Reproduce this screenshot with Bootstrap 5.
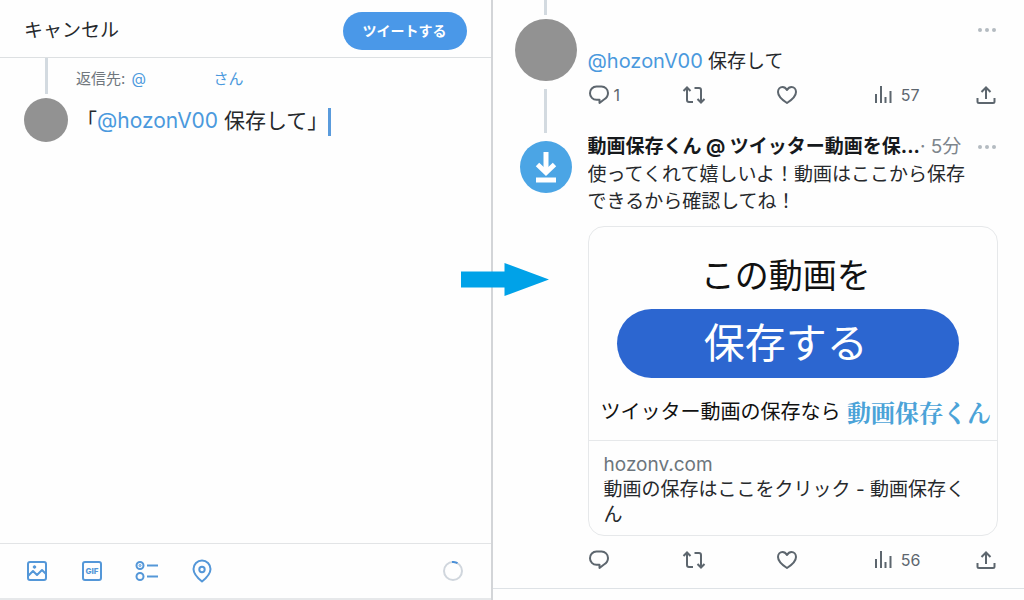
<!DOCTYPE html>
<html lang="ja">
<head>
<meta charset="utf-8">
<meta name="viewport" content="width=device-width, initial-scale=1">
<title>動画保存くん</title>
<link href="https://cdn.jsdelivr.net/npm/bootstrap@5.3.0/dist/css/bootstrap.min.css" rel="stylesheet">
<style>
  body { font-family: Inter, "Noto Sans CJK JP", sans-serif; color: #26292c; background: #fefefe; }
  a { color: #4a99dd; text-decoration: none; }
  svg { display: block; }
  .pane-compose { width: 48.1%; border-right: 2px solid #d3d5d8; }
  .compose-head { height: 58px; border-bottom: 1px solid #dde0e2; padding: 4px 24px 0; }
  .btn-cancel { font-size: 19px; line-height: 28px; color: #26292c; }
  .btn-tweet { font-size: 14px; font-weight: 700; line-height: 22px; color: #fff; background: #4a98e8; padding: 8px 20px; }
  .compose-rail { width: 44px; }
  .thread-line { width: 3px; background: #d3dae0; }
  .dot-avatar { background: #929292; border-radius: 50%; }
  .reply-to { font-size: 15px; line-height: 22px; color: #70777d; padding-top: 10px; }
  .reply-name { width: 84px; padding-left: 2px; }
  .draft { font-size: 21px; line-height: 32px; outline: 0; margin-top: 15px; }
  .caret { display: inline-block; width: 3px; height: 28px; background: #5a9bdc; vertical-align: middle; }
  .compose-tools { height: 57px; border-top: 1px solid #e2e4e6; border-bottom: 2px solid #e6e8ea; padding: 0 28px 0 25px; color: #5497d8; }
  .tool-set { gap: 31px; }
  .pane-thread { padding: 0 26px 0 21px; }
  .rail { width: 64px; }
  .post { gap: 10px; }
  .post-text { font-size: 19px; line-height: 27px; }
  .mention { font-size: 20px; }
  .post-name { font-size: 19px; line-height: 28px; color: #16191c; }
  .post-time { font-size: 19px; line-height: 28px; color: #7d858c; }
  .post-actions { display: grid; grid-template-columns: repeat(4, 23%) auto; color: #5d666e; font-size: 16px; line-height: 24px; }
  .btn-plain { border: 0; padding: 0; background: none; color: inherit; display: flex; align-items: center; }
  .dots { color: #b4bbc1; }
  .logo-avatar { width: 52px; height: 52px; background: #4ba5e5; border-radius: 50%; }
  .link-card { border: 1px solid #e6e8ea; border-radius: 16px; color: inherit; overflow: hidden; margin-top: 11px; }
  .promo { padding: 24px 6px 8px 12px; border-bottom: 1px solid #e6e8ea; color: #111; }
  .promo-title { font-size: 34px; line-height: 50px; padding-right: 20px; }
  .promo-pill { font-size: 41px; line-height: 69px; background: #2c66d0; color: #fff; margin: 8px 32px 14px 16px; padding-right: 4px; }
  .promo-foot { font-size: 20px; line-height: 40px; }
  .promo-brand { font-family: "Noto Serif CJK JP", "Noto Sans CJK JP", serif; font-size: 24px; font-weight: 700; color: #4ba3d8; }
  .card-info { font-size: 19px; line-height: 25px; padding: 11px 15px 8px; }
  .card-host { color: #6c757c; }
  .flow-arrow { position: absolute; left: 45%; top: 263px; }
</style>
</head>
<body>
<main class="d-flex min-vh-100 position-relative">

  <section class="pane-compose d-flex flex-column flex-shrink-0">
    <header class="compose-head d-flex align-items-center justify-content-between">
      <button type="button" class="btn-plain btn-cancel">キャンセル</button>
      <button type="button" class="btn btn-tweet rounded-pill border-0">ツイートする</button>
    </header>
    <div class="d-flex flex-grow-1 px-4">
      <div class="compose-rail d-flex flex-column align-items-center flex-shrink-0">
        <div class="thread-line" style="height:36px"></div>
        <div class="dot-avatar mt-1" style="width:44px;height:44px"></div>
      </div>
      <div class="flex-grow-1 ps-2">
        <div class="reply-to d-flex">
          <span>返信先:&nbsp;</span><a href="#" class="reply-name">@</a><a href="#">さん</a>
        </div>
        <div class="draft" contenteditable="true" role="textbox" aria-label="ツイート本文">「<a href="#">@hozonV00</a> 保存して」<span class="caret"></span></div>
      </div>
    </div>
    <footer class="compose-tools d-flex align-items-center justify-content-between">
      <div class="tool-set d-flex align-items-center">
        <button type="button" class="btn-plain" aria-label="画像">
          <svg width="24" height="24" viewBox="0 0 24 24" fill="none" stroke="currentColor" stroke-width="2"><rect x="3" y="3" width="18" height="18" rx="2"/><path d="M3 17l5-5 4 4 5-5 4 4" stroke-linejoin="round"/><circle cx="9.500" cy="8" r="1.300" fill="currentColor" stroke-width="1"/></svg>
        </button>
        <button type="button" class="btn-plain" aria-label="GIF">
          <svg width="24" height="24" viewBox="0 0 24 24" fill="none" stroke="currentColor" stroke-width="2"><rect x="3" y="3" width="18" height="18" rx="2"/><text x="12" y="15" text-anchor="middle" font-size="8" font-weight="800" fill="currentColor" stroke="none">GIF</text></svg>
        </button>
        <button type="button" class="btn-plain" aria-label="投票">
          <svg width="24" height="24" viewBox="0 0 24 24" fill="none" stroke="currentColor" stroke-width="2"><circle cx="5" cy="6.500" r="3.500"/><circle cx="5" cy="6.500" r="1" stroke-width="1"/><circle cx="5" cy="17.500" r="3.500"/><path d="M12 6.500h11M12 17.500h11"/></svg>
        </button>
        <button type="button" class="btn-plain" aria-label="位置情報">
          <svg width="24" height="24" viewBox="0 0 24 24" fill="none" stroke="currentColor" stroke-width="2"><path d="M12 22.500C7 18.500 3.500 14.500 3.500 10a8.500 8.500 0 0 1 17 0c0 4.500-3.500 8.500-8.500 12.500z" stroke-linejoin="round"/><circle cx="12" cy="10.500" r="2.700"/></svg>
        </button>
      </div>
      <svg width="20" height="20" viewBox="0 0 20 20" fill="none" stroke-width="2"><circle cx="10" cy="10" r="9" stroke="#d0d6dd"/><path d="M9 1.050A9 9 0 0 1 14.500 2.200" stroke="#4a90d9"/></svg>
    </footer>
  </section>

  <div class="flex-grow-1 overflow-hidden">
   <section class="pane-thread border-bottom">
    <article class="post d-flex">
      <div class="rail d-flex flex-column align-items-center flex-shrink-0">
        <div class="thread-line" style="height:15px"></div>
        <div class="dot-avatar mt-1" style="width:62px;height:62px"></div>
        <div class="thread-line mt-2" style="height:44px"></div>
      </div>
      <div class="flex-grow-1">
        <div class="d-flex justify-content-end pt-4">
          <button type="button" class="btn-plain dots" aria-label="その他"><svg width="22" height="12" viewBox="0 0 22 12" fill="currentColor"><circle cx="4" cy="6" r="2"/><circle cx="11" cy="6" r="2"/><circle cx="18" cy="6" r="2"/></svg></button>
        </div>
        <div class="post-text mt-2 pt-1"><a href="#" class="mention">@hozonV00</a> 保存して</div>
        <div class="post-actions mt-2">
          <button type="button" class="btn-plain gap-1" aria-label="返信 1"><svg width="22" height="22" viewBox="0 0 22 22" fill="none" stroke="currentColor" stroke-width="2"><path d="M8.500 2.500h5a6.500 6.500 0 0 1 6.500 6.500c0 3-1.500 5-4 6.500l-4.500 3.500v-3.200h-3A6.500 6.500 0 0 1 2 9.200 6.500 6.500 0 0 1 8.500 2.500z" stroke-linejoin="round"/></svg><span>1</span></button>
          <button type="button" class="btn-plain" aria-label="リツイート"><svg width="24" height="22" viewBox="0 0 24 22" fill="none" stroke="currentColor" stroke-width="2"><path d="M1.500 7L5 3.500 8.500 7M5 4v12q0 2 2 2h4M12.500 4H17q2 0 2 2v12M15.500 15l3.500 3.500 3.500-3.500"/></svg></button>
          <button type="button" class="btn-plain" aria-label="いいね"><svg width="22" height="22" viewBox="0 0 22 22" fill="none" stroke="currentColor" stroke-width="2"><path d="M11 19C5.500 15.500 2 12 2 8c0-3 2-5 4.500-5C8.700 3 10 4.300 11 6c1-1.700 2.300-3 4.500-3C18 3 20 5 20 8c0 4-3.500 7.500-9 11z" stroke-linejoin="round"/></svg></button>
          <button type="button" class="btn-plain gap-2" aria-label="表示 57"><svg width="22" height="22" viewBox="0 0 22 22" fill="none" stroke="currentColor" stroke-width="2"><path d="M5 19V10M10 19V2M14.500 19v-6M19.500 19V7"/></svg><span>57</span></button>
          <button type="button" class="btn-plain justify-content-end" aria-label="共有"><svg width="22" height="22" viewBox="0 0 22 22" fill="none" stroke="currentColor" stroke-width="2"><path d="M1.500 14v3.500q0 1.500 1.500 1.500h14q1.500 0 1.500-1.500V14M10 15V3.500M5.500 8L10 3.500 14.500 8"/></svg></button>
        </div>
      </div>
    </article>

    <article class="post d-flex">
      <div class="rail d-flex flex-column align-items-center flex-shrink-0">
        <div class="logo-avatar mt-2">
          <svg width="52" height="52" viewBox="0 0 52 52" fill="none" stroke="#fff"><path d="M26 11v19" stroke-width="5"/><path d="M17.500 23.500l8.500 8 8.500-8" stroke-width="5"/><path d="M16 39h20" stroke-width="5"/></svg>
        </div>
      </div>
      <div class="flex-grow-1 overflow-hidden">
        <div class="d-flex align-items-center">
          <span class="post-name fw-bold text-nowrap">動画保存くん @ ツイッター動画を保...</span>
          <span class="post-time text-nowrap">· 5分</span>
          <button type="button" class="btn-plain dots ms-auto" aria-label="その他"><svg width="22" height="12" viewBox="0 0 22 12" fill="currentColor"><circle cx="4" cy="6" r="2"/><circle cx="11" cy="6" r="2"/><circle cx="18" cy="6" r="2"/></svg></button>
        </div>
        <div class="post-text">使ってくれて嬉しいよ！動画はここから保存<br>できるから確認してね！</div>
        <a href="#" class="link-card d-block">
          <div class="promo">
            <div class="promo-title text-center">この動画を</div>
            <div class="promo-pill rounded-pill text-center">保存する</div>
            <div class="promo-foot d-flex justify-content-between text-nowrap"><span>ツイッター動画の保存なら</span><span class="promo-brand">動画保存くん</span></div>
          </div>
          <div class="card-info">
            <div class="card-host">hozonv.com</div>
            <div>動画の保存はここをクリック - 動画保存くん</div>
          </div>
        </a>
        <div class="post-actions mt-2 pt-1 pb-3">
          <button type="button" class="btn-plain" aria-label="返信"><svg width="22" height="22" viewBox="0 0 22 22" fill="none" stroke="currentColor" stroke-width="2"><path d="M8.500 2.500h5a6.500 6.500 0 0 1 6.500 6.500c0 3-1.500 5-4 6.500l-4.500 3.500v-3.200h-3A6.500 6.500 0 0 1 2 9.200 6.500 6.500 0 0 1 8.500 2.500z" stroke-linejoin="round"/></svg></button>
          <button type="button" class="btn-plain" aria-label="リツイート"><svg width="24" height="22" viewBox="0 0 24 22" fill="none" stroke="currentColor" stroke-width="2"><path d="M1.500 7L5 3.500 8.500 7M5 4v12q0 2 2 2h4M12.500 4H17q2 0 2 2v12M15.500 15l3.500 3.500 3.500-3.500"/></svg></button>
          <button type="button" class="btn-plain" aria-label="いいね"><svg width="22" height="22" viewBox="0 0 22 22" fill="none" stroke="currentColor" stroke-width="2"><path d="M11 19C5.500 15.500 2 12 2 8c0-3 2-5 4.500-5C8.700 3 10 4.300 11 6c1-1.700 2.300-3 4.500-3C18 3 20 5 20 8c0 4-3.500 7.500-9 11z" stroke-linejoin="round"/></svg></button>
          <button type="button" class="btn-plain gap-2" aria-label="表示 56"><svg width="22" height="22" viewBox="0 0 22 22" fill="none" stroke="currentColor" stroke-width="2"><path d="M5 19V10M10 19V2M14.500 19v-6M19.500 19V7"/></svg><span>56</span></button>
          <button type="button" class="btn-plain justify-content-end" aria-label="共有"><svg width="22" height="22" viewBox="0 0 22 22" fill="none" stroke="currentColor" stroke-width="2"><path d="M1.500 14v3.500q0 1.500 1.500 1.500h14q1.500 0 1.500-1.500V14M10 15V3.500M5.500 8L10 3.500 14.500 8"/></svg></button>
        </div>
      </div>
    </article>
   </section>
  </div>

  <svg class="flow-arrow" width="88" height="33" viewBox="0 0 88 33" fill="#00a2e8" aria-hidden="true"><path d="M0 8.500h43.500V0L88 16.500 43.500 33v-8.500H0z"/></svg>
</main>
<script src="https://cdn.jsdelivr.net/npm/bootstrap@5.3.0/dist/js/bootstrap.bundle.min.js"></script>
</body>
</html>
